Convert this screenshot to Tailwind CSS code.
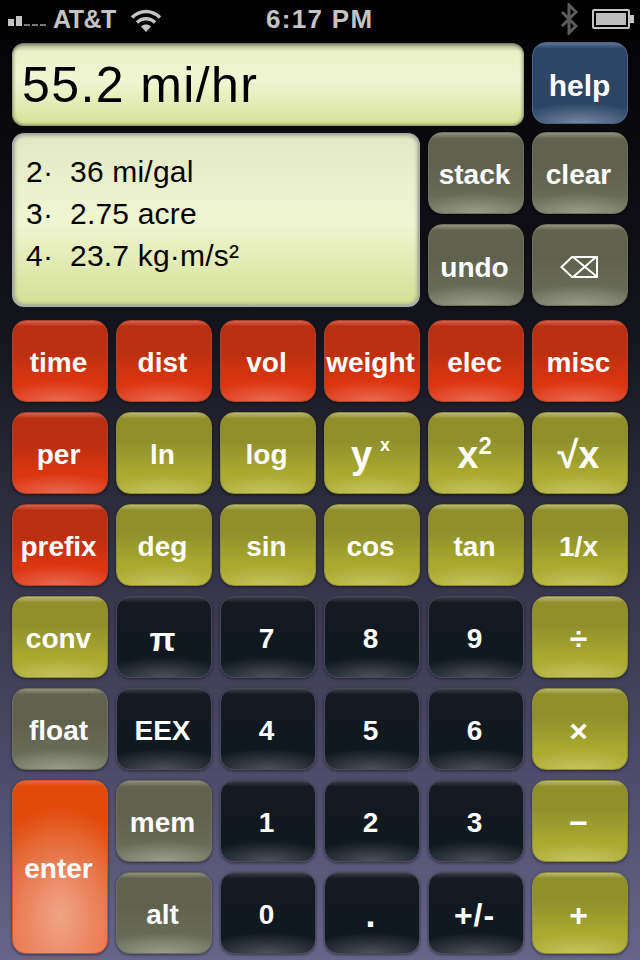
<!DOCTYPE html>
<html lang="en">
  <head>
    <meta charset="UTF-8" />
    <title>Calculator</title>
    <script src="https://cdn.jsdelivr.net/npm/@tailwindcss/browser@4"></script>
  </head>
  <body class="w-[640px] h-[960px] overflow-hidden bg-black font-['Liberation_Sans',Arial,sans-serif]">
    <!-- status bar -->
    <div class="h-[40px] bg-black flex items-center text-[#c4c4c4] font-bold relative">
      <div class="ml-[8px] flex items-end gap-[2px] h-[10px] mt-[1px]">
        <span class="w-[6px] h-[7px] bg-[#c4c4c4]"></span>
        <span class="w-[6px] h-[10px] bg-[#c4c4c4]"></span>
        <span class="w-[6px] h-[2px] bg-[#777]"></span>
        <span class="w-[6px] h-[2px] bg-[#777]"></span>
        <span class="w-[6px] h-[2px] bg-[#777]"></span>
      </div>
      <span class="ml-[7px] text-[25px] tracking-[-0.5px] leading-none mt-[-2px]">AT&amp;T</span>
      <svg class="ml-[14px] mt-[-1px]" width="32" height="24" viewBox="0 0 32 24" fill="none" stroke="#c4c4c4" stroke-width="3.4">
        <path d="M2 9.5C10 1.5 22 1.5 30 9.5" />
        <path d="M7 14.5C12 9.5 20 9.5 25 14.5" />
        <path d="M16 24l-5-5.5c3-2.6 7-2.6 10 0z" fill="#c4c4c4" stroke="none" />
      </svg>
      <span class="absolute left-[266px] top-[5px] text-[26px] tracking-[1.3px] leading-[28px]">6:17 PM</span>
      <svg class="absolute left-[560px] top-[3px]" width="18" height="32" viewBox="0 0 18 32" fill="none" stroke="#5c5c5c" stroke-width="3">
        <path d="M2 9l14 14-7 7V2l7 7L2 23" />
      </svg>
      <div class="absolute left-[592px] top-[9px] w-[38px] h-[20px] border-[2px] border-[#c4c4c4] rounded-[2px] p-[2px]">
        <div class="w-full h-full bg-[#bdbdbd]"></div>
      </div>
      <div class="absolute left-[630px] top-[15px] w-[4px] h-[8px] bg-[#c4c4c4]"></div>
    </div>

    <!-- calculator body -->
    <div class="h-[920px] bg-[linear-gradient(to_bottom,#050507_0%,#13131b_30%,#2c2c3c_50%,#4e4c6a_80%,#67668a_100%)] px-[12px] pt-[2px]">
      <div class="flex gap-[8px]">
        <div class="w-[512px] h-[83px] mt-[1px] rounded-[12px] bg-[linear-gradient(to_bottom,#a6a88c_0%,#eaf0c6_10%,#f0f6d2_45%,#d6e298_100%)] shadow-[inset_0_0_4px_#3f4230] flex items-center pl-[10px] text-black text-[50px] tracking-[1.4px] leading-none">55.2 mi/hr</div>
        <button class="w-[96px] h-[82px] pt-[5px] pr-[1px] rounded-[14px] text-white font-bold text-[30px] border border-[#4a6385] bg-[radial-gradient(ellipse_70px_20px_at_50%_100%,#7488a2_0%,transparent_100%),linear-gradient(to_bottom,#5d7596_0%,#2f4668_7%,#2c4365_100%)]">help</button>
      </div>

      <div class="flex gap-[8px] mt-[6px]">
        <div class="w-[408px] h-[174px] mt-[1px] rounded-[12px] border-[2px] border-[#a9aca8] shadow-[inset_0_0_4px_#8a8c80] bg-[linear-gradient(to_bottom,#e2e8c4_0%,#f0f6d2_50%,#d4e096_100%)] pl-[12px] pt-[16px] text-black text-[30px] tracking-[0.2px] leading-[42px]">
          <div class="flex"><span class="w-[44px]">2·</span><span>36 mi/gal</span></div>
          <div class="flex"><span class="w-[44px]">3·</span><span>2.75 acre</span></div>
          <div class="flex"><span class="w-[44px]">4·</span><span>23.7 kg·m/s²</span></div>
        </div>
        <div id="side" class="grid grid-cols-[repeat(2,96px)] grid-rows-[repeat(2,82px)] gap-x-[8px] gap-y-[10px]"></div>
      </div>

      <div id="keys" class="grid grid-cols-[repeat(6,96px)] grid-rows-[repeat(7,82px)] gap-x-[8px] gap-y-[10px] mt-[13px]"></div>
    </div>

    <script>
      const base = "rounded-[14px] flex items-center justify-center pt-[4px] pr-[3px] text-white font-bold text-[28px] leading-none shadow-[0_1px_3px_rgba(0,0,0,0.5)] border ";
      const red = base + "border-[#a8452e] bg-[radial-gradient(ellipse_70px_20px_at_50%_100%,#e86a50_0%,transparent_100%),linear-gradient(to_bottom,#d8604a_0%,#b83010_7%,#bb3010_40%,#dc3510_75%,#dc3510_100%)]";
      const olive = base + "border-[#8d8d3e] bg-[radial-gradient(ellipse_70px_20px_at_50%_100%,#c4c45e_0%,transparent_100%),linear-gradient(to_bottom,#b8b870_0%,#8f8f2c_7%,#8f902c_35%,#a9ab2e_75%,#a9ab2e_100%)]";
      const dark = base + "border-[#484b58] bg-[radial-gradient(ellipse_70px_20px_at_50%_100%,#4d5159_0%,transparent_100%),linear-gradient(to_bottom,#3c3f4a_0%,#171a22_7%,#101820_60%,#101820_100%)]";
      const gray = base + "border-[#6e705c] bg-[radial-gradient(ellipse_70px_20px_at_50%_100%,#9a9c8a_0%,transparent_100%),linear-gradient(to_bottom,#90927d_0%,#616350_7%,#5f614d_40%,#6f7160_100%)]";
      const enter = base + "row-span-2 border-[#c9582a] bg-[radial-gradient(ellipse_75px_110px_at_50%_78%,#f0a488_0%,transparent_100%),linear-gradient(to_bottom,#e86a3a_0%,#e04a0a_3%,#e04a0a_20%,#e8693a_100%)]";

      const backspace = '<svg width="38" height="22" viewBox="0 0 38 22" fill="none" stroke="#fff" stroke-width="2"><path d="M1.5 11L12 1h25v20H12zM13 1l23 19M36 1L13 21"/></svg>';

      const side = [
        ["stack", gray], ["clear", gray], ['<span class="mt-[1px]">undo</span>', gray], [backspace, gray],
      ];
      const keys = [
        ["time", red], ["dist", red], ["vol", red], ["weight", red], ["elec", red], ["misc", red],
        ["per", red], ["ln", olive], ["log", olive],
        ['<span class="text-[38px]">y</span><span class="text-[18px] ml-[8px] mb-[20px]">x</span>', olive],
        ['<span class="text-[38px]">x</span><span class="text-[24px] font-bold mb-[18px]">2</span>', olive],
        ['<span class="text-[38px]">√x</span>', olive],
        ["prefix", red], ["deg", olive], ["sin", olive], ["cos", olive], ["tan", olive], ["1/x", olive],
        ["conv", olive], ['<span class="text-[34px]">π</span>', dark], ["7", dark], ["8", dark], ["9", dark], ['<span class="text-[32px]">÷</span>', olive],
        ["float", gray], ["EEX", dark], ["4", dark], ["5", dark], ["6", dark], ['<span class="text-[32px]">×</span>', olive],
        ["enter", enter], ["mem", gray], ["1", dark], ["2", dark], ["3", dark], ['<span class="text-[32px]">−</span>', olive],
        ["alt", gray], ["0", dark], ['<span class="text-[36px]">.</span>', dark], ['<span class="text-[32px] tracking-[1px]">+/-</span>', dark], ['<span class="text-[32px]">+</span>', olive],
      ];

      function fill(id, list) {
        document.getElementById(id).innerHTML = list
          .map(([label, cls]) => `<button class="${cls}">${label}</button>`)
          .join("");
      }
      fill("side", side);
      fill("keys", keys);
    </script>
  </body>
</html>
